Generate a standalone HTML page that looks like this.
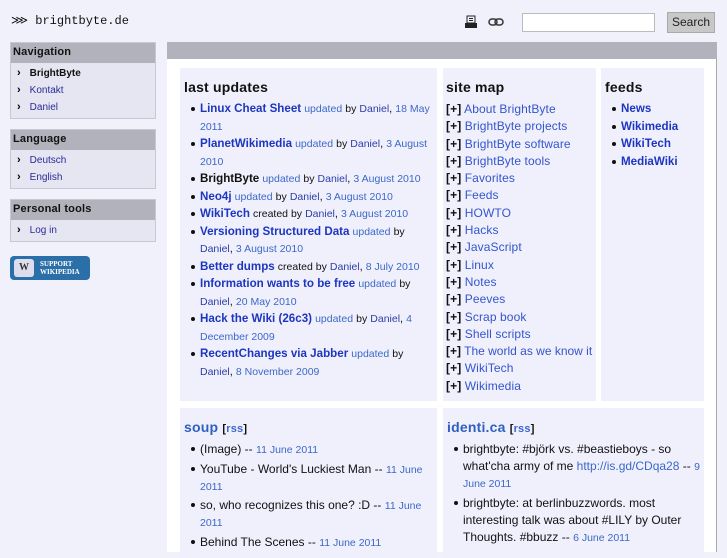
<!DOCTYPE html>
<html><head><meta charset="utf-8"><style>
*{margin:0;padding:0;box-sizing:border-box}
body{width:727px;height:545px;overflow:hidden;background:#f1f1fc;font-family:"Liberation Sans",sans-serif;color:#111;position:relative}
a{text-decoration:none}
.abs{position:absolute}
.logo{left:11px;top:13px;font-family:"Liberation Mono",monospace;font-size:12px;color:#111}
.pb{left:10px;width:146px;border:1px solid #c8c8d4;background:#e6e6f2}
.pb h3{background:#b2b2bc;font-size:11px;font-weight:bold;padding:3px 2px;height:20px;letter-spacing:0.2px}
.pb ul{list-style:none;padding:2px 0 2px 6px}
.pb li{font-size:10px;line-height:17px;color:#2a2a99;height:17px}
.pb li:before{content:"›";color:#000;font-size:11px;font-weight:bold;margin-right:9px}
.main{left:167px;top:42px;width:550px;height:510px;background:#fff;border-right:1px solid #aaa}
.bar{left:167px;top:42px;width:550px;height:17px;background:#b2b2bc}
.box{background:#f0f0fc}
h2{font-size:14px;font-weight:bold;color:#111;margin-bottom:6px;letter-spacing:0.2px}
ul.b{list-style:none}
ul.b li{position:relative;padding-left:16px;font-size:11px;line-height:17.5px}
ul.b li span,ul.b li a,ul.b li b{line-height:1}
ul.b li:before{content:"";position:absolute;left:7px;top:6px;width:4px;height:4px;border-radius:2px;background:#111}
.L{color:#1c36c0;font-weight:bold;font-size:11.6px}
.m{color:#3b68c8;font-size:10.5px}
.d{color:#2b3da8;font-size:10.5px}
.s{font-size:10.5px}
.sm div{font-size:12px;line-height:17.3px;color:#3355cc;letter-spacing:0.1px}
.sm b{color:#111;font-weight:bold}
ul.t{margin-top:2px}
ul.t li{font-size:12px;line-height:17px;margin-bottom:2.5px}
ul.t li:before{top:6px}
.sb{left:522px;top:13px;width:133px;height:19px;background:#fff;border:1px solid #bbb}
.btn{left:667px;top:12px;width:48px;height:21px;background:#c8c8c8;border:1px solid #aaa;font-size:12px;text-align:center;line-height:19px;color:#222}
</style></head><body>
<div class="abs logo"><span style="font-size:12px">⋙</span> brightbyte.de</div>
<svg class="abs" style="left:464px;top:15px" width="14" height="14"><rect x="3" y="1" width="8" height="7" fill="none" stroke="#222"/><line x1="5" y1="3.5" x2="9" y2="3.5" stroke="#222"/><line x1="5" y1="5.5" x2="9" y2="5.5" stroke="#222"/><rect x="1" y="8" width="12" height="5" fill="#222"/></svg>
<svg class="abs" style="left:488px;top:18px" width="16" height="8"><rect x="1" y="1" width="8" height="6" rx="3" fill="none" stroke="#333" stroke-width="1.5"/><rect x="7" y="1" width="8" height="6" rx="3" fill="none" stroke="#333" stroke-width="1.5"/></svg>
<div class="abs sb"></div>
<div class="abs btn">Search</div>

<div class="abs pb" style="top:42px;height:77px"><h3>Navigation</h3><ul><li style="color:#111;font-weight:bold">BrightByte</li><li>Kontakt</li><li>Daniel</li></ul></div>
<div class="abs pb" style="top:129px;height:60px"><h3>Language</h3><ul><li>Deutsch</li><li>English</li></ul></div>
<div class="abs pb" style="top:199px;height:43px"><h3>Personal tools</h3><ul><li>Log in</li></ul></div>
<div class="abs" style="left:10px;top:256px;width:80px;height:24px;background:#2a6fa8;border-radius:4px;color:#fff;font-family:'Liberation Serif',serif;font-size:7px;font-weight:bold;line-height:8px;padding:4px 0 0 30px">SUPPORT<br>WIKIPEDIA<div class="abs" style="left:4px;top:3px;width:20px;height:18px;background:#dde;border-radius:3px;color:#333;font-size:10px;text-align:center;line-height:18px">W</div></div>

<div class="abs main"></div>
<div class="abs bar"></div>

<div class="abs box" style="left:180px;top:68px;width:257px;height:333px;padding:11px 4px">
<h2>last updates</h2>
<ul class="b">
<li><a class="L">Linux Cheat Sheet</a> <span class="m">updated</span> <span class="s">by</span> <span class="d">Daniel</span>, <span class="m">18 May</span><br><span class="m">2011</span></li>
<li><a class="L">PlanetWikimedia</a> <span class="m">updated</span> <span class="s">by</span> <span class="d">Daniel</span>, <span class="m">3 August</span><br><span class="m">2010</span></li>
<li><b style="font-size:11.6px">BrightByte</b> <span class="m">updated</span> <span class="s">by</span> <span class="d">Daniel</span>, <span class="m">3 August 2010</span></li>
<li><a class="L">Neo4j</a> <span class="m">updated</span> <span class="s">by</span> <span class="d">Daniel</span>, <span class="m">3 August 2010</span></li>
<li><a class="L">WikiTech</a> <span class="s">created by</span> <span class="d">Daniel</span>, <span class="m">3 August 2010</span></li>
<li><a class="L">Versioning Structured Data</a> <span class="m">updated</span> <span class="s">by</span><br><span class="d">Daniel</span>, <span class="m">3 August 2010</span></li>
<li><a class="L">Better dumps</a> <span class="s">created by</span> <span class="d">Daniel</span>, <span class="m">8 July 2010</span></li>
<li><a class="L">Information wants to be free</a> <span class="m">updated</span> <span class="s">by</span><br><span class="d">Daniel</span>, <span class="m">20 May 2010</span></li>
<li><a class="L">Hack the Wiki (26c3)</a> <span class="m">updated</span> <span class="s">by</span> <span class="d">Daniel</span>, <span class="m">4</span><br><span class="m">December 2009</span></li>
<li><a class="L">RecentChanges via Jabber</a> <span class="m">updated</span> <span class="s">by</span><br><span class="d">Daniel</span>, <span class="m">8 November 2009</span></li>
</ul></div>

<div class="abs box sm" style="left:443px;top:68px;width:153px;height:333px;padding:11px 3px">
<h2>site map</h2>
<div><b>[+]</b> About BrightByte</div><div><b>[+]</b> BrightByte projects</div><div><b>[+]</b> BrightByte software</div><div><b>[+]</b> BrightByte tools</div><div><b>[+]</b> Favorites</div><div><b>[+]</b> Feeds</div><div><b>[+]</b> HOWTO</div><div><b>[+]</b> Hacks</div><div><b>[+]</b> JavaScript</div><div><b>[+]</b> Linux</div><div><b>[+]</b> Notes</div><div><b>[+]</b> Peeves</div><div><b>[+]</b> Scrap book</div><div><b>[+]</b> Shell scripts</div><div style="white-space:nowrap;letter-spacing:0"><b>[+]</b> The world as we know it</div><div><b>[+]</b> WikiTech</div><div><b>[+]</b> Wikimedia</div>
</div>

<div class="abs box" style="left:601px;top:68px;width:103px;height:333px;padding:11px 4px">
<h2>feeds</h2>
<ul class="b"><li><a class="L">News</a></li><li><a class="L">Wikimedia</a></li><li><a class="L">WikiTech</a></li><li><a class="L">MediaWiki</a></li></ul>
</div>

<div class="abs box" style="left:180px;top:408px;width:257px;height:150px;padding:11px 4px">
<h2><span style="color:#2f5fc0">soup</span> <span style="font-size:11px">[<span style="color:#3b68c8">rss</span>]</span></h2>
<ul class="b t">
<li>(Image) -- <span class="m">11 June 2011</span></li>
<li>YouTube - World's Luckiest Man -- <span class="m">11 June</span><br><span class="m">2011</span></li>
<li>so, who recognizes this one? :D -- <span class="m">11 June</span><br><span class="m">2011</span></li>
<li>Behind The Scenes -- <span class="m">11 June 2011</span></li>
</ul></div>

<div class="abs box" style="left:443px;top:408px;width:261px;height:150px;padding:11px 4px">
<h2><span style="color:#2f5fc0">identi.ca</span> <span style="font-size:11px">[<span style="color:#3b68c8">rss</span>]</span></h2>
<ul class="b t">
<li style="white-space:nowrap">brightbyte: #björk vs. #beastieboys - so<br>what'cha army of me <span style="color:#3b68c8">http://is.gd/CDqa28</span> -- <span class="m">9</span><br><span class="m">June 2011</span></li>
<li style="white-space:nowrap">brightbyte: at berlinbuzzwords. most<br>interesting talk was about #LILY by Outer<br>Thoughts. #bbuzz -- <span class="m">6 June 2011</span></li>
</ul></div>
</body></html>
